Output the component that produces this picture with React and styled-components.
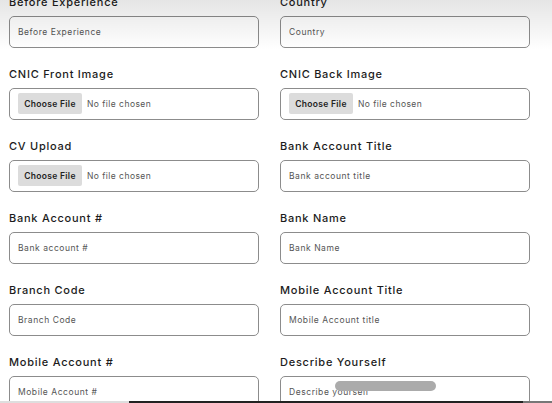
import React from 'react';
import styled, { createGlobalStyle } from 'styled-components';

const GlobalStyle = createGlobalStyle`
  html, body {
    margin: 0;
    padding: 0;
    background: #fff;
    overflow: hidden;
    font-family: Inter, "Noto Sans", sans-serif;
  }
`;

const Page = styled.div`
  position: relative;
  width: 552px;
  height: 403px;
  overflow: hidden;
`;

const Form = styled.form`
  display: grid;
  grid-template-columns: 250px 250px;
  column-gap: 21px;
  row-gap: 18px;
  padding-left: 9px;
  margin-top: -6px;
`;

const Field = styled.div`
  display: flex;
  flex-direction: column;
`;

const Label = styled.label`
  font-size: 11px;
  line-height: 16px;
  font-weight: 500;
  letter-spacing: 0.75px;
  color: #1c1c1c;
  margin-bottom: 6px;
`;

const TextInput = styled.input`
  box-sizing: border-box;
  height: 32px;
  width: 100%;
  border: 1px solid #8c8c8c;
  border-radius: 5px;
  padding: 0 8px;
  background: transparent;
  font-family: inherit;
  font-size: 8.5px;
  letter-spacing: 0.55px;
  outline: none;

  &::placeholder {
    color: #555;
  }
`;

const FileInput = styled.input`
  box-sizing: border-box;
  height: 32px;
  width: 100%;
  border: 1px solid #8c8c8c;
  border-radius: 5px;
  padding: 4px 8px;
  background: transparent;
  font-family: inherit;
  font-size: 8.5px;
  letter-spacing: 0.45px;
  color: #555;

  &::file-selector-button {
    height: 21px;
    width: 64px;
    margin-right: 5px;
    border: none;
    border-radius: 2px;
    background: #dcdcdc;
    color: #222;
    font-family: inherit;
    font-size: 8.5px;
    font-weight: 600;
    letter-spacing: 0.3px;
  }
`;

const TopShade = styled.div`
  position: absolute;
  top: 0;
  left: 0;
  right: 0;
  height: 50px;
  background: linear-gradient(rgba(0, 0, 0, 0.1), rgba(0, 0, 0, 0));
  pointer-events: none;
`;

const ScrollThumb = styled.div`
  position: absolute;
  left: 335px;
  top: 381px;
  width: 101px;
  height: 10px;
  border-radius: 5px;
  background: #ababab;
`;

const BottomBar = styled.div`
  position: absolute;
  left: 0;
  right: 0;
  bottom: 0;
  height: 2px;
  display: flex;
`;

const BarPart = styled.div`
  width: ${p => p.w}px;
  flex: ${p => (p.grow ? 1 : 'none')};
  background: ${p => p.color};
`;

const fields = [
  { label: 'Before Experience', placeholder: 'Before Experience' },
  { label: 'Country', placeholder: 'Country' },
  { label: 'CNIC Front Image', file: true },
  { label: 'CNIC Back Image', file: true },
  { label: 'CV Upload', file: true },
  { label: 'Bank Account Title', placeholder: 'Bank account title' },
  { label: 'Bank Account #', placeholder: 'Bank account #' },
  { label: 'Bank Name', placeholder: 'Bank Name' },
  { label: 'Branch Code', placeholder: 'Branch Code' },
  { label: 'Mobile Account Title', placeholder: 'Mobile Account title' },
  { label: 'Mobile Account #', placeholder: 'Mobile Account #' },
  { label: 'Describe Yourself', placeholder: 'Describe yourself' },
];

export default function App() {
  return (
    <Page>
      <GlobalStyle />
      <Form>
        {fields.map(f => (
          <Field key={f.label}>
            <Label>{f.label}</Label>
            {f.file ? (
              <FileInput type="file" />
            ) : (
              <TextInput type="text" placeholder={f.placeholder} />
            )}
          </Field>
        ))}
      </Form>
      <TopShade />
      <ScrollThumb />
      <BottomBar>
        <BarPart w={129} color="#dedede" />
        <BarPart grow color="#222" />
        <BarPart w={29} color="#777" />
      </BottomBar>
    </Page>
  );
}
